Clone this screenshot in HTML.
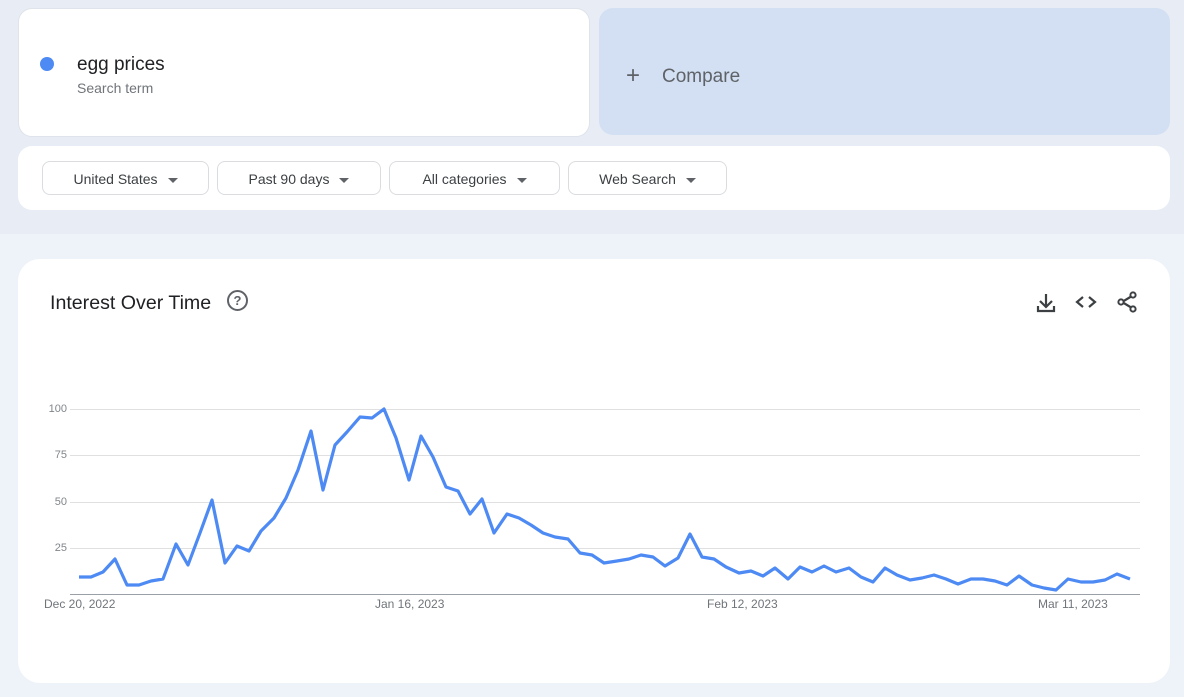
<!DOCTYPE html>
<html><head><meta charset="utf-8"><style>
body{margin:0;width:1184px;height:697px;background:#eef2f9;font-family:"Liberation Sans",sans-serif;position:relative;overflow:hidden}
.top{position:absolute;left:0;top:0;width:1184px;height:234px;background:#e8edf5}
.card{position:absolute;background:#fff;border-radius:14px}
.chip{position:absolute;top:161px;height:34px;border:1px solid #dadce0;border-radius:8px;background:#fff;font-size:14px;color:#3c4043;line-height:34px;text-align:center;box-sizing:border-box}
.chip:after{content:"";display:inline-block;margin-left:10px;border-left:5px solid transparent;border-right:5px solid transparent;border-top:5px solid #5f6368;vertical-align:middle}
.yl{position:absolute;left:40px;width:27px;text-align:right;font-size:11px;color:#80868b}
.xl{position:absolute;top:597px;font-size:12px;color:#70757a}
</style></head><body>
<div class="top"></div>
<div class="card" style="left:18px;top:8px;width:572px;height:129px;border:1px solid #dfe3ea;box-sizing:border-box"></div>
<div style="position:absolute;left:40px;top:57px;width:14px;height:14px;border-radius:50%;background:#4e8af4"></div>
<div style="position:absolute;left:77px;top:54px;font-size:19px;color:#202124">egg prices</div>
<div style="position:absolute;left:77px;top:80px;font-size:14px;color:#70757a">Search term</div>
<div style="position:absolute;left:599px;top:8px;width:571px;height:127px;background:#d3e0f3;border-radius:14px"></div>
<div style="position:absolute;left:626px;top:62px;font-size:24px;color:#5f6368;font-weight:300">+</div>
<div style="position:absolute;left:662px;top:66px;font-size:19px;color:#5f6368">Compare</div>
<div class="card" style="left:18px;top:146px;width:1152px;height:64px"></div>
<div class="chip" style="left:42px;width:167px">United States</div>
<div class="chip" style="left:217px;width:164px">Past 90 days</div>
<div class="chip" style="left:389px;width:171px">All categories</div>
<div class="chip" style="left:568px;width:159px">Web Search</div>
<div class="card" style="left:18px;top:259px;width:1152px;height:424px;border-radius:22px"></div>
<div style="position:absolute;left:50px;top:292px;font-size:19.6px;color:#202124">Interest Over Time</div>
<div style="position:absolute;left:227px;top:290px;width:17px;height:17px;border:2px solid #5f6368;border-radius:50%;font-size:13px;font-weight:bold;color:#5f6368;text-align:center;line-height:17px">?</div>
<svg style="position:absolute;left:1030px;top:288px" width="120" height="30" viewBox="0 0 120 30">
<g fill="none" stroke="#3c4043" stroke-width="2.2">
<path d="M16 6v12M10 13l6 6 6-6M8 18v5h16v-5"/>
<path d="M53 9l-6 5 6 5M59 9l6 5-6 5"/>
<path d="M102 8l-10 6 10 6"/>
</g>
<g fill="#fff" stroke="#3c4043" stroke-width="2"><circle cx="103" cy="7" r="2.6"/><circle cx="91" cy="14" r="2.6"/><circle cx="103" cy="21" r="2.6"/></g>
</svg>
<svg style="position:absolute;left:0;top:0" width="1184" height="697">
<g stroke="#e0e0e0" stroke-width="1"><line x1="70" x2="1140" y1="409.5" y2="409.5"/><line x1="70" x2="1140" y1="455.5" y2="455.5"/><line x1="70" x2="1140" y1="502.5" y2="502.5"/><line x1="70" x2="1140" y1="548.5" y2="548.5"/></g>
<line x1="70" x2="1140" y1="594.5" y2="594.5" stroke="#9aa0a6"/>
<polyline fill="none" stroke="#4e8af4" stroke-width="3.2" stroke-linejoin="round" points="79,577 91,577 103,572 115,559 127,585 139,585 151,581 163,579 176,544 188,565 200,533 212,500 225,563 237,546 249,551 261,531 274,518 286,498 298,470 311,431 323,490 335,445 347,432 360,417 372,418 384,409 396,438 409,480 421,436 433,457 446,487 458,491 470,514 482,499 494,533 507,514 519,518 531,525 543,533 555,537 568,539 580,553 592,555 604,563 617,561 629,559 641,555 653,557 665,566 678,558 690,534 702,557 714,559 726,567 739,573 751,571 763,576 775,568 788,579 800,567 812,572 824,566 836,572 849,568 861,577 873,582 885,568 897,575 910,580 922,578 934,575 946,579 958,584 971,579 983,579 995,581 1007,585 1019,576 1032,585 1044,588 1056,590 1068,579 1081,582 1093,582 1105,580 1117,574 1130,579"/>
</svg>
<div class="yl" style="top:403px">100</div>
<div class="yl" style="top:449px">75</div>
<div class="yl" style="top:496px">50</div>
<div class="yl" style="top:542px">25</div>
<div class="xl" style="left:44px">Dec 20, 2022</div>
<div class="xl" style="left:375px">Jan 16, 2023</div>
<div class="xl" style="left:707px">Feb 12, 2023</div>
<div class="xl" style="left:1038px">Mar 11, 2023</div>
</body></html>
